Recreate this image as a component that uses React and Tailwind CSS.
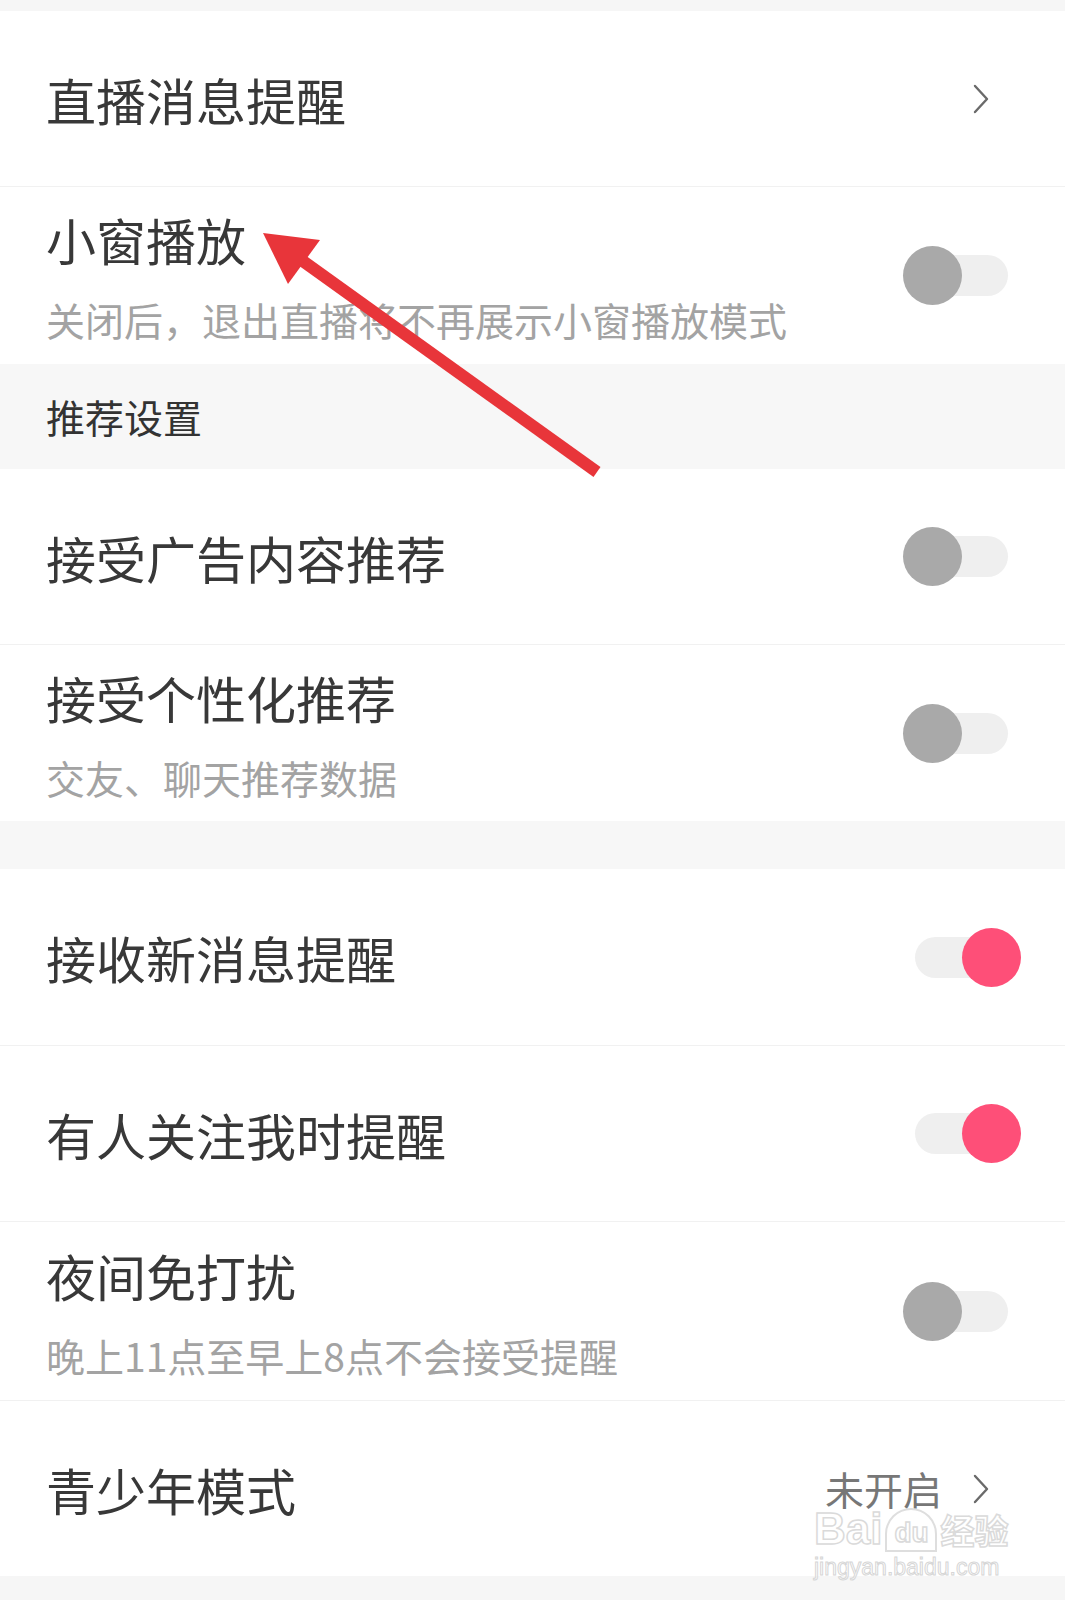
import React from 'react'

const font = { fontFamily: '"Noto Sans CJK SC", "Noto Sans", sans-serif' }

function Toggle({ on }) {
  return (
    <div className="relative w-[118px] h-[59px] shrink-0">
      <div className="absolute left-[12px] top-[9px] w-[93px] h-[41px] rounded-full bg-[#efefef]" />
      {on
        ? <div className="absolute right-0 top-0 w-[59px] h-[59px] rounded-full bg-[#fe4f78]" />
        : <div className="absolute left-0 top-0 w-[59px] h-[59px] rounded-full bg-[#a9a9a9]" />}
    </div>
  )
}

function Chevron() {
  return (
    <svg width="18" height="32" viewBox="0 0 18 32" className="shrink-0">
      <polyline points="3,3 15,16 3,29" fill="none" stroke="#6a6a6a" strokeWidth="2.4" strokeLinecap="round" strokeLinejoin="round" />
    </svg>
  )
}

function Row({ title, sub, right, h = 'h-[176px]', border = true }) {
  return (
    <div className={`${h} flex items-center justify-between pl-[46px] pr-[44px] bg-white ${border ? 'border-b border-[#f1f1f1]' : ''}`}>
      <div className={`flex flex-col ${sub ? 'pt-[2px] gap-[25px]' : ''}`}>
        <div className="text-[50px] leading-[60px] text-[#383838]">{title}</div>
        {sub && <div className="text-[39px] leading-[50px] text-[#a3a3a3]">{sub}</div>}
      </div>
      {right}
    </div>
  )
}

export default function App() {
  return (
    <div className="relative w-[1065px] h-[1600px] bg-white overflow-hidden" style={font}>
      <div className="h-[11px] bg-[#f6f6f6]" />
      <Row title="直播消息提醒" right={<div className="mr-[31px]"><Chevron /></div>} />
      <Row title="小窗播放" sub="关闭后，退出直播将不再展示小窗播放模式" h="h-[177px]" border={false} right={<Toggle />} />
      <div className="h-[105px] bg-[#f7f7f7] flex items-center pl-[46px] text-[39px] text-[#333333]">推荐设置</div>
      <Row title="接受广告内容推荐" right={<Toggle />} />
      <Row title="接受个性化推荐" sub="交友、聊天推荐数据" border={false} right={<Toggle />} />
      <div className="h-[48px] bg-[#f7f7f7]" />
      <Row title="接收新消息提醒" h="h-[177px]" right={<Toggle on />} />
      <Row title="有人关注我时提醒" right={<Toggle on />} />
      <Row title="夜间免打扰" sub="晚上11点至早上8点不会接受提醒" h="h-[179px]" right={<Toggle />} />
      <Row
        title="青少年模式"
        h="h-[175px]"
        border={false}
        right={
          <div className="flex items-center gap-[30px] mr-[31px]">
            <span className="text-[39px] text-[#777777]">未开启</span>
            <Chevron />
          </div>
        }
      />
      <div className="h-[24px] bg-[#f6f6f6]" />

      {/* watermark */}
      <div className="absolute left-[814px] top-[1506px] pointer-events-none" style={{ fontFamily: '"Liberation Sans", "Noto Sans CJK SC", sans-serif' }}>
        <div className="flex items-end text-[44px] leading-[46px] font-bold text-transparent [-webkit-text-stroke:1.5px_#dadada]">
          <span>Bai</span>
          <span className="mx-[3px] w-[52px] h-[44px] rounded-t-full border-2 border-[#dedede] flex items-end justify-center text-[28px] leading-[34px]">du</span>
          <span className="text-[34px] leading-[40px]">经验</span>
        </div>
        <div className="mt-[3px] text-[23px] leading-[24px] text-transparent [-webkit-text-stroke:1px_#d6d6d6]">jingyan.baidu.com</div>
      </div>

      {/* red arrow */}
      <svg className="absolute inset-0 pointer-events-none" width="1065" height="1600" viewBox="0 0 1065 1600">
        <line x1="597" y1="472" x2="300" y2="259" stroke="#e8353a" strokeWidth="12" />
        <polygon points="263,233 320,240 288,284" fill="#e8353a" />
      </svg>
    </div>
  )
}
